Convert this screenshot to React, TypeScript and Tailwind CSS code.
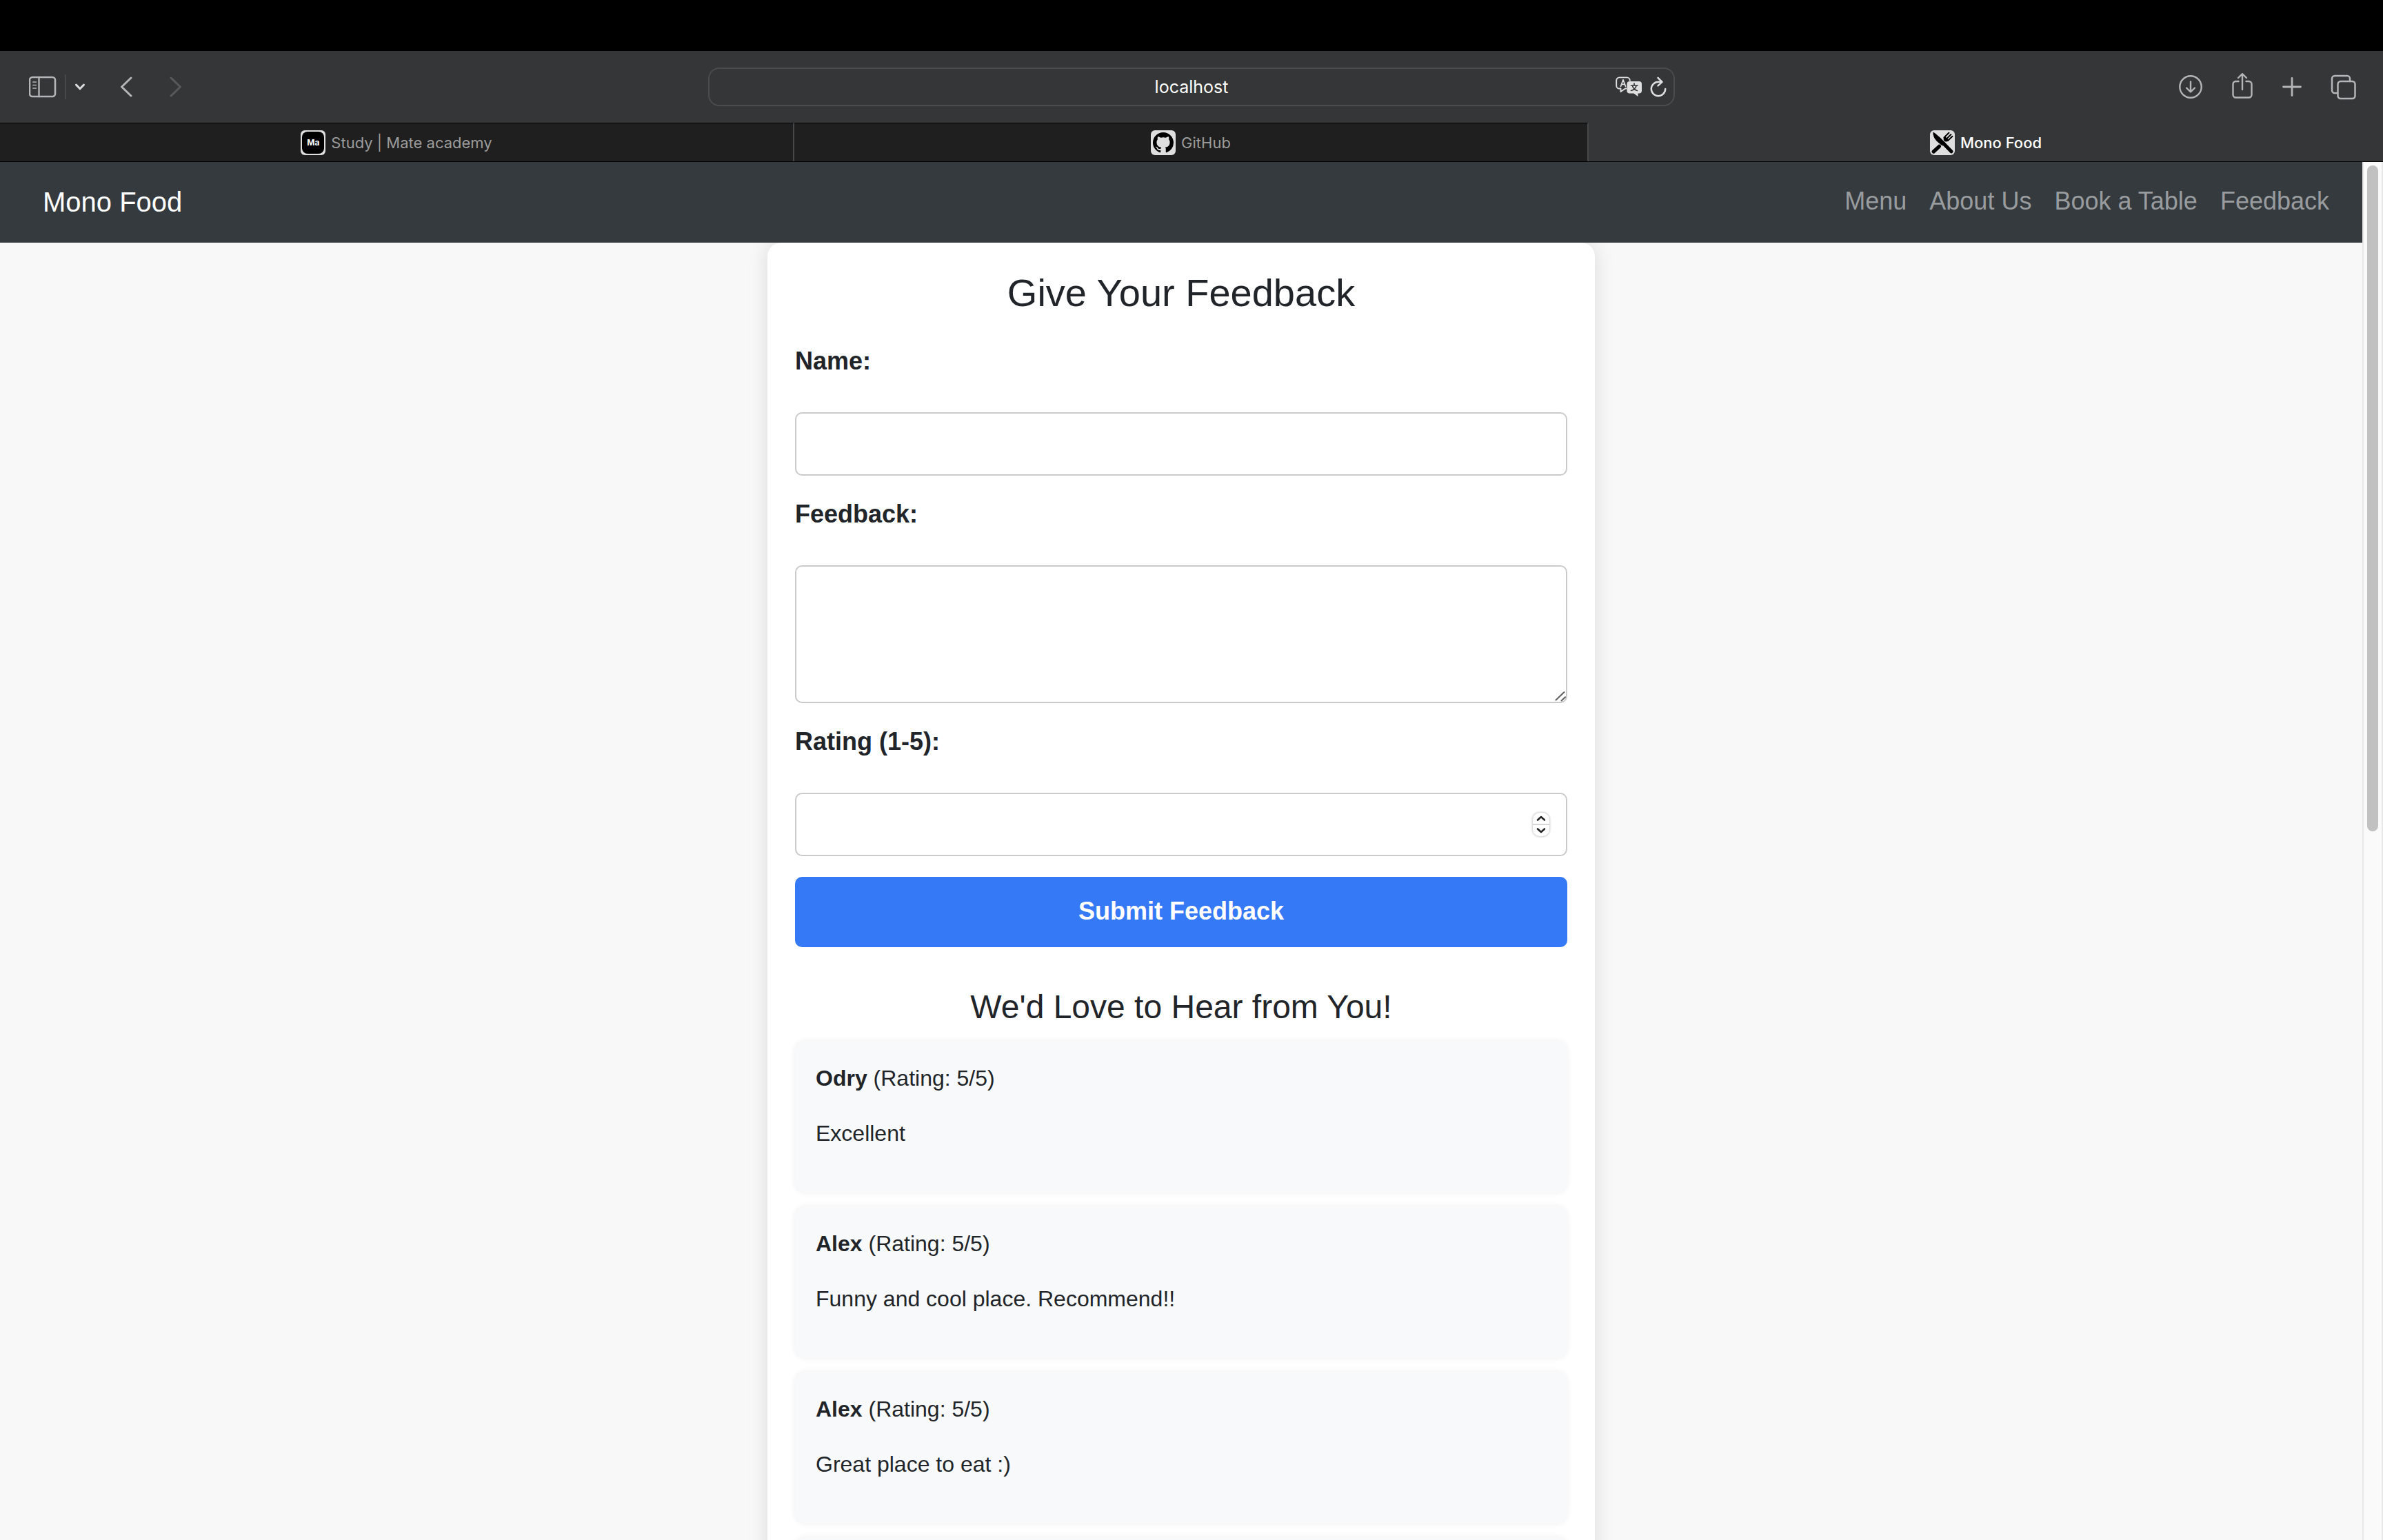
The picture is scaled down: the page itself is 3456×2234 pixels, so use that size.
import React from "react";

type Review = { name?: string; rating?: number; text?: string };

const reviews: Review[] = [
  { name: "Odry", rating: 5, text: "Excellent" },
  { name: "Alex", rating: 5, text: "Funny and cool place. Recommend!!" },
  { name: "Alex", rating: 5, text: "Great place to eat :)" },
  {},
];

const navLinks = ["Menu", "About Us", "Book a Table", "Feedback"];

type IconProps = { className?: string; children: React.ReactNode; w: number; h: number; sw?: number };

function Icon({ className, children, w, h, sw = 3 }: IconProps) {
  return (
    <svg
      className={className}
      width={w}
      height={h}
      viewBox={`0 0 ${w} ${h}`}
      fill="none"
      stroke="currentColor"
      strokeWidth={sw}
      strokeLinecap="round"
      strokeLinejoin="round"
      aria-hidden="true"
    >
      {children}
    </svg>
  );
}

function Toolbar() {
  return (
    <div className="grid h-[104px] shrink-0 grid-cols-[1fr_1402px_1fr] items-center bg-[#353638] text-[#b4b5b6]">
      <div className="flex items-center pl-[42px]">
        <button aria-label="Show sidebar">
          <Icon w={40} h={32} sw={2}>
            <rect x="1" y="2" width="37" height="28" rx="4" strokeWidth="2.6" />
            <path d="M14.5 2v28" strokeWidth="2.4" />
            <path d="M5.8 9h4.6M5.8 13.5h4.6M5.8 18h4.6" strokeWidth="1.6" />
          </Icon>
        </button>
        <div className="ml-3 h-9 w-0.5 bg-[#47484a]" />
        <button aria-label="Tab groups" className="ml-3 text-[#dcdcdd]">
          <Icon w={16} h={12} sw={3}>
            <path d="M2.5 3l5.5 5.8L13.5 3" />
          </Icon>
        </button>
        <button aria-label="Back" className="ml-[50px]">
          <Icon w={18} h={32}>
            <path d="M16 3L2.5 16L16 29" />
          </Icon>
        </button>
        <button aria-label="Forward" className="ml-[54px] text-[#58595b]">
          <Icon w={18} h={32}>
            <path d="M2 3L15.5 16L2 29" />
          </Icon>
        </button>
      </div>
      <div className="relative">
        <input
          aria-label="Address"
          defaultValue="localhost"
          className="block h-14 w-full rounded-2xl border-2 border-[#4b4c4e] bg-transparent px-24 text-center font-['Inter'] text-[25px] text-white outline-none"
        />
        <div className="absolute inset-y-0 right-3 flex items-center gap-3 text-[#dfdfe0]">
          <button aria-label="Translate">
            <svg width="38" height="30" viewBox="0 0 38 30" fill="none" aria-hidden="true">
              <path
                d="M15.5 17.5H14L7.5 22V17.5H5.5A4.3 4.3 0 0 1 1.2 13.2V5.7A4.3 4.3 0 0 1 5.5 1.4H16.5A4.3 4.3 0 0 1 20.8 5.7"
                stroke="currentColor"
                strokeWidth="1.9"
                strokeLinejoin="round"
                strokeLinecap="round"
              />
              <path
                d="M7.5 14.3L11 4.8L14.5 14.3M8.6 11.3H13.4"
                stroke="currentColor"
                strokeWidth="1.8"
                strokeLinecap="round"
                strokeLinejoin="round"
              />
              <path
                d="M20.5 7H34a4 4 0 0 1 4 4v9.5a4 4 0 0 1-4 4h-1.5V29L26.5 24.5H20.5a4 4 0 0 1-4-4V11a4 4 0 0 1 4-4z"
                fill="currentColor"
              />
              <path
                d="M27 10v2.5M22.5 13h9.5M24.5 13.5c.8 3 3.5 6 7 7M30 13.5c-.8 3-3.5 6-7.5 7"
                stroke="#353638"
                strokeWidth="1.7"
                strokeLinecap="round"
              />
            </svg>
          </button>
          <button aria-label="Reload">
            <Icon w={24} h={30} sw={2.5}>
              <path d="M17 7.8H12A10.2 10.2 0 1 0 22.2 18" />
              <path d="M11.5 1.8L17.5 7.8L11.5 13.4" />
            </Icon>
          </button>
        </div>
      </div>
      <div className="flex items-center justify-end gap-[41px] pr-[38px]">
        <button aria-label="Downloads">
          <Icon w={36} h={36} sw={2.4}>
            <circle cx="18" cy="18" r="15.7" />
            <path d="M18 10.5V25M12 19.5L18 25.3L24 19.5" />
          </Icon>
        </button>
        <button aria-label="Share" className="pb-1">
          <Icon w={32} h={40} sw={2.4}>
            <path d="M10.500 14H6.500A4 4 0 0 0 2.500 18V33.500A4 4 0 0 0 6.500 37.500H25.500A4 4 0 0 0 29.500 33.500V18A4 4 0 0 0 25.500 14H21.500" />
            <path d="M16 26V3.5M10 9L16 3.2L22 9" />
          </Icon>
        </button>
        <button aria-label="New tab">
          <Icon w={30} h={30} sw={2.8}>
            <path d="M15 2.5V27.500M2.500 15H27.500" />
          </Icon>
        </button>
        <button aria-label="Tab overview">
          <Icon w={38} h={38} sw={2.5}>
            <path d="M10 28H6A4 4 0 0 1 2 24V7A4 4 0 0 1 6 3H24A4 4 0 0 1 28 7V11" />
            <rect x="10.5" y="11" width="25" height="25" rx="4" />
          </Icon>
        </button>
      </div>
    </div>
  );
}

function MateIcon() {
  return (
    <span className="flex size-9 items-center justify-center rounded-md bg-[#dfdfdf]" aria-hidden="true">
      <span className="flex size-8 items-center justify-center rounded-lg bg-black font-['Inter'] text-[12px] font-bold text-white">
        Ma
      </span>
    </span>
  );
}

function GithubIcon() {
  return (
    <span className="flex size-9 items-center justify-center rounded-md bg-[#dfdfdf]" aria-hidden="true">
      <svg width="30" height="30" viewBox="0 0 16 16" fill="#000">
        <path d="M8 0C3.58 0 0 3.58 0 8c0 3.54 2.29 6.53 5.47 7.59.4.07.55-.17.55-.38 0-.19-.01-.82-.01-1.49-2.01.37-2.53-.49-2.69-.94-.09-.23-.48-.94-.82-1.13-.28-.15-.68-.52-.01-.53.63-.01 1.08.58 1.23.82.72 1.21 1.87.87 2.33.66.07-.52.28-.87.51-1.07-1.78-.2-3.64-.89-3.64-3.95 0-.87.31-1.59.82-2.15-.08-.2-.36-1.02.08-2.12 0 0 .67-.21 2.2.82.64-.18 1.32-.27 2-.27s1.36.09 2 .27c1.53-1.04 2.2-.82 2.2-.82.44 1.1.16 1.92.08 2.12.51.56.82 1.27.82 2.15 0 3.07-1.87 3.75-3.65 3.95.29.25.54.73.54 1.48 0 1.07-.01 1.93-.01 2.2 0 .21.15.46.55.38A8.01 8.01 0 0 0 16 8c0-4.42-3.58-8-8-8z" />
      </svg>
    </span>
  );
}

function CutleryIcon() {
  return (
    <span className="flex size-9 items-center justify-center rounded-md bg-[#dfdfdf]" aria-hidden="true">
      <svg width="36" height="36" viewBox="0 0 36 36" fill="none">
        <path d="M4.5 2.5C8 4 19 14.5 22.5 18.5L19 22.5L16.5 21.5L10 16C6.5 12.5 4 7.5 4.5 2.5z" fill="#000" />
        <path d="M20 19.5L31 30.7" stroke="#000" strokeWidth="5.2" strokeLinecap="round" />
        <path d="M5.2 31L13.5 23.3" stroke="#000" strokeWidth="5.2" strokeLinecap="round" />
        <path d="M20.5 10.5L27.5 3.5M24 12.5L30.5 6M26 15L32.5 8.8" stroke="#000" strokeWidth="1.9" strokeLinecap="round" />
        <path d="M20 10C19 13 20 15.5 22 16.3C24.5 17 26.500 16 27.500 14.500L22 9z" fill="#000" />
      </svg>
    </span>
  );
}

function TabBar() {
  return (
    <div className="grid h-[57px] shrink-0 grid-cols-3 border-b border-black bg-[#353638] font-['Inter'] text-[22px] leading-7">
      <button className="flex items-center justify-center gap-2 border-t border-r-2 border-t-black border-r-[#47484a] bg-[#1e1f1e] text-[#9b9b9b]">
        <MateIcon />
        Study | Mate academy
      </button>
      <button className="flex items-center justify-center gap-2 border-t border-r-2 border-t-black border-r-[#47484a] bg-[#1e1f1e] text-[#9b9b9b]">
        <GithubIcon />
        GitHub
      </button>
      <button className="flex items-center justify-center gap-2 border-t border-t-[#353638] font-medium text-white">
        <CutleryIcon />
        Mono Food
      </button>
    </div>
  );
}

const label = "mb-[46px] block text-[36px] leading-[56px] font-bold";
const field = "block w-full rounded-[10px] border-2 border-[#cacaca] bg-white px-5 text-[32px] outline-none";

function FeedbackForm() {
  return (
    <form onSubmit={(e) => e.preventDefault()}>
      <div className="flex flex-col gap-7">
        <div>
          <label htmlFor="name" className={label}>
            Name:
          </label>
          <input id="name" type="text" className={`${field} h-[92px]`} />
        </div>
        <div>
          <label htmlFor="feedback" className={label}>
            Feedback:
          </label>
          <div className="relative">
            <textarea id="feedback" className={`${field} h-[200px] resize-none`} />
            <Icon w={16} h={16} sw={2} className="absolute right-0.5 bottom-0.5 text-[#5f5f5f]">
              <path d="M1.5 13.5L13.5 2M9.5 14.5L15 9.2" />
            </Icon>
          </div>
        </div>
        <div>
          <label htmlFor="rating" className={label}>
            Rating (1-5):
          </label>
          <div className="relative">
            <input
              id="rating"
              type="number"
              min={1}
              max={5}
              className={`${field} h-[92px] [appearance:textfield]`}
            />
            <div className="absolute inset-y-0 right-[26px] flex items-center">
              <div className="flex h-[34px] w-6 flex-col divide-y-2 divide-[#d6d6d6] overflow-hidden rounded-[10px] text-[#222] shadow-[0_0_3px_1px_rgba(0,0,0,0.2)]">
                <button type="button" aria-label="Increase rating" className="flex flex-1 items-center justify-center">
                  <Icon w={14} h={10} sw={2.6}>
                    <path d="M2 7.5L7 3L12 7.5" />
                  </Icon>
                </button>
                <button type="button" aria-label="Decrease rating" className="flex flex-1 items-center justify-center">
                  <Icon w={14} h={10} sw={2.6}>
                    <path d="M2 2.5L7 7L12 2.5" />
                  </Icon>
                </button>
              </div>
            </div>
          </div>
        </div>
      </div>
      <button
        type="submit"
        className="mt-[30px] h-[102px] w-full rounded-[10px] bg-[#3579f6] pb-0.5 text-[36px] font-bold text-white"
      >
        Submit Feedback
      </button>
    </form>
  );
}

function ReviewCard({ review }: { review: Review }) {
  return (
    <li className="rounded-2xl bg-[#f8f9fa] p-[30px] shadow-[0_0_10px_rgba(0,0,0,0.07)]">
      {review.name && (
        <>
          <p className="mb-8">
            <strong>{review.name}</strong> (Rating: {review.rating}/5)
          </p>
          <p className="mb-8">{review.text}</p>
        </>
      )}
    </li>
  );
}

export default function App() {
  return (
    <div className="flex h-screen flex-col overflow-hidden bg-[#f8f8f8] font-['Liberation_Sans',sans-serif] text-[#212529]">
      <div className="h-[74px] shrink-0 bg-black" />
      <Toolbar />
      <TabBar />
      <div className="flex min-h-0 flex-1">
        <div className="min-w-0 flex-1 overflow-hidden">
          <nav className="relative z-10 flex h-[117px] items-center justify-between bg-[#353a3e] pr-12 pb-0.5 pl-[62px]">
            <a href="#home" className="text-[40px] leading-[60px] text-white">
              Mono Food
            </a>
            <div className="flex gap-[33px] pb-0.5 text-[36px] leading-[54px] text-[#999c9e]">
              {navLinks.map((l) => (
                <a key={l} href="#top">
                  {l}
                </a>
              ))}
            </div>
          </nav>
          <main className="mx-auto w-full max-w-[1200px] rounded-[20px] bg-white p-10 shadow-[0_0_30px_rgba(0,0,0,0.12)]">
            <h2 className="mb-[38px] text-center text-[56px] leading-[66px]">Give Your Feedback</h2>
            <FeedbackForm />
            <h3 className="mt-[58px] mb-5 text-center text-[48px] leading-[58px]">We'd Love to Hear from You!</h3>
            <ul className="flex flex-col gap-5 text-[32px] leading-[48px]">
              {reviews.map((r, i) => (
                <ReviewCard key={i} review={r} />
              ))}
            </ul>
          </main>
        </div>
        <div className="flex w-[30px] shrink-0 justify-center border-x-2 border-[#e8e8e8] bg-[#fafafa] pt-[5px]">
          <div className="h-[966px] w-4 rounded-full bg-[#c1c1c1]" />
        </div>
      </div>
    </div>
  );
}
